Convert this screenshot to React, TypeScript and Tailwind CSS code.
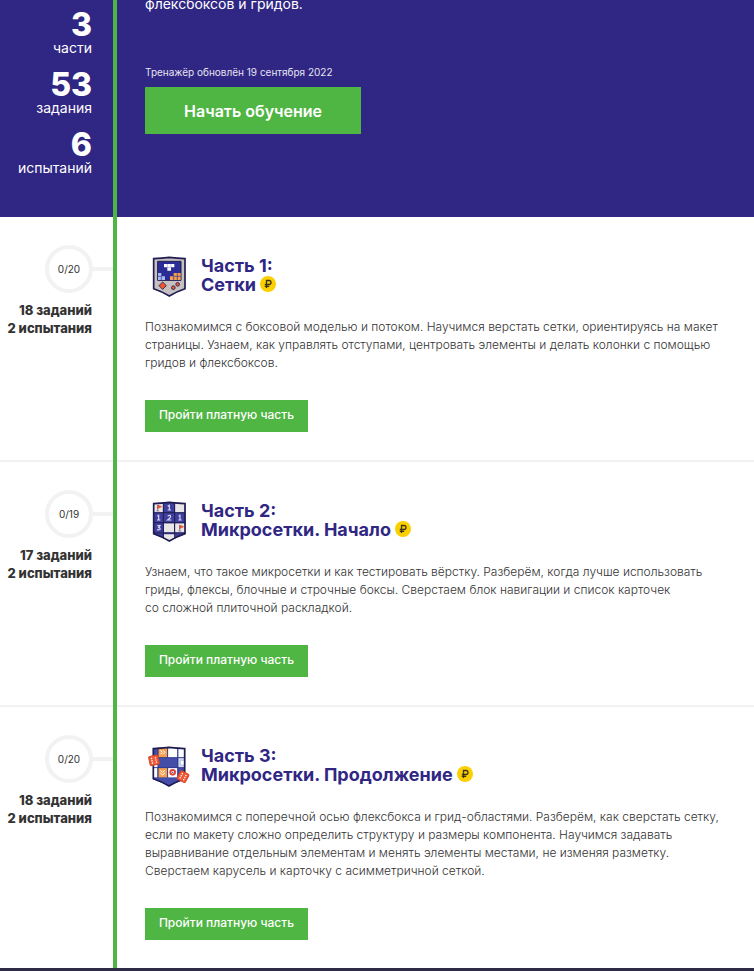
import type { ReactNode } from 'react';

const SHIELD = 'M24 25 L73 20 L122 25 L122 117 Q98 127 73 138 Q48 127 24 117 Z';
const OUTLINE = 'M26 26 Q50 25 73 22 Q97 25 120 26 L120 116 Q96 124 73 138 Q50 124 26 116 Z';

function ConsoleIcon() {
  return (
    <svg viewBox="0 6 144 144" className="size-12 shrink-0" aria-hidden="true">
      <path d={OUTLINE} fill="#c6c0c1" stroke="#1e1c50" strokeWidth="5" />
      <path d="M38 34 H108 V91 H38 Z" fill="#2b2c96" stroke="#1e1c50" strokeWidth="3" />
      <path d="M57 42 H88 V52 H78 V62 H67 V52 H57 Z" fill="#fff" />
      <path d="M67 42 V52 M78 42 V52 M67 52 H78" stroke="#8b8bc8" strokeWidth="1.5" />
      <path d="M39 69 H49 V79 H60 V90 H39 Z" fill="#a9bdec" />
      <path d="M39 79 H49 V90" fill="none" stroke="#2b2c96" strokeWidth="2" />
      <path d="M75 79 H86 V69 H107 V90 H75 Z" fill="#f5a04c" />
      <path d="M86 79 H107 M86 79 V90 M97 69 V90" stroke="#2b2c96" strokeWidth="2" />
      <path d="M53 96 L64 107 L53 118 L42 107 Z" fill="#ef5630" stroke="#1e1c50" strokeWidth="2.5" />
      <path d="M48 102 H58 V112 H48 Z" fill="#ef5630" />
      <circle cx="85" cy="113" r="5.5" fill="#ef5630" stroke="#1e1c50" strokeWidth="2.5" />
      <circle cx="98" cy="103" r="5.5" fill="#ef5630" stroke="#1e1c50" strokeWidth="2.5" />
    </svg>
  );
}

function Flag({ x, y }: { x: number; y: number }) {
  return (
    <g transform={`translate(${x} ${y})`}>
      <path d="M0 0 L12 5 L0 11 Z" fill="#ef5630" stroke="#ef5630" strokeWidth="2" />
      <path d="M0 0 V18 M-4 18 H5" stroke="#6b5a75" strokeWidth="2" />
    </g>
  );
}

function MinesIcon() {
  return (
    <svg viewBox="0 6 144 144" className="size-12 shrink-0" aria-hidden="true">
      <defs>
        <clipPath id="mines-shield">
          <path d={SHIELD} />
        </clipPath>
      </defs>
      <g clipPath="url(#mines-shield)">
        <rect x="20" y="18" width="106" height="124" fill="#3f3e9d" />
        <rect x="24" y="20" width="30" height="33" fill="#e9e6e8" />
        <rect x="90" y="20" width="32" height="33" fill="#e9e6e8" />
        <rect x="57" y="85" width="30" height="27" fill="#e9e6e8" />
        <rect x="90" y="85" width="32" height="27" fill="#e9e6e8" />
        <path d="M57 118 H90 V140 H57 Z" fill="#e9e6e8" />
        <path d="M55 20 V138 M89 20 V138 M24 53 H122 M24 83 H122 M24 114 H122" stroke="#1e1c50" strokeWidth="3" />
      </g>
      <Flag x={38} y={30} />
      <Flag x={104} y={90} />
      <g fill="none" stroke="#d7d8f3" strokeWidth="3.5">
        <path d="M68 34 L73 31 V44 M68 45 H78" />
        <path d="M37 64 L41 61 V74 M36 75 H46" />
        <path d="M68 63 Q77 58 77 65 Q76 69 68 75 H79" />
        <path d="M101 64 L105 61 V74 M100 75 H110" />
        <path d="M37 92 H45 L41 98 Q47 99 45 103 Q42 106 36 104" />
      </g>
      <path d={OUTLINE} fill="none" stroke="#1e1c50" strokeWidth="5" />
    </svg>
  );
}

function Die({ x, y, angle }: { x: number; y: number; angle: number }) {
  return (
    <g transform={`translate(${x} ${y}) rotate(${angle})`}>
      <rect x="-14" y="-14" width="28" height="28" rx="4" fill="#f15a35" stroke="#d4452c" strokeWidth="3" />
      <g fill="#fff">
        <circle cx="-6" cy="-7" r="2.2" />
        <circle cx="6" cy="-7" r="2.2" />
        <circle cx="-6" cy="0" r="2.2" />
        <circle cx="6" cy="0" r="2.2" />
        <circle cx="-6" cy="7" r="2.2" />
        <circle cx="6" cy="7" r="2.2" />
      </g>
    </g>
  );
}

function DiceIcon() {
  return (
    <svg viewBox="15 6 144 144" className="size-12 shrink-0" aria-hidden="true">
      <g transform="translate(14 0)">
        <clipPath id="dice-shield">
          <path d={SHIELD} />
        </clipPath>
        <g clipPath="url(#dice-shield)">
          <rect x="20" y="18" width="106" height="124" fill="#444da8" />
          <rect x="41" y="20" width="27" height="32" fill="#f5a04c" />
          <rect x="70" y="20" width="28" height="32" fill="#fff" />
          <rect x="101" y="20" width="25" height="32" fill="#fff" />
          <rect x="101" y="54" width="25" height="28" fill="#d3daf0" />
          <rect x="20" y="54" width="19" height="28" fill="#fff" />
          <rect x="41" y="84" width="27" height="28" fill="#f5a04c" />
          <rect x="70" y="84" width="28" height="28" fill="#fff" />
          <rect x="20" y="84" width="18" height="28" fill="#fff" />
          <path d="M40 20 V113 M69 20 V52 M69 84 V112 M99 20 V112 M24 53 H122 M24 83 H122" stroke="#292e82" strokeWidth="2" />
          <path d="M107 61 H120 V75 H107 Z" fill="#fff" stroke="#9cabd9" strokeWidth="2" />
        </g>
        <path d={OUTLINE} fill="none" stroke="#1e1c50" strokeWidth="5" />
        <path d="M47 31 L53 37 L47 43 M55 31 L61 37 L55 43 M47 91 L54 97 L61 91 M47 99 L54 105 L61 99" fill="none" stroke="#fff" strokeWidth="3" />
        <circle cx="84" cy="97" r="7" fill="#fff" stroke="#df4538" strokeWidth="6" />
        <circle cx="84" cy="97" r="2" fill="#292e82" />
      </g>
      <Die x={42} y={61} angle={-12} />
      <Die x={129} y={110} angle={28} />
    </svg>
  );
}

function Rouble() {
  return (
    <span className="inline-flex size-4 items-center justify-center rounded-full bg-[#fbd000] align-middle" title="Платная часть">
      <svg viewBox="0 0 16 16" className="size-4" fill="none" stroke="#3c3418" strokeWidth="1.3" aria-hidden="true">
        <path d="M6.5 12 V4.5 H9 Q11 4.5 11 6.5 Q11 8.5 9 8.5 H4.8 M4.8 10.3 H9.2" />
      </svg>
    </span>
  );
}

interface Part {
  done: string;
  tasks: string;
  number: string;
  name: string;
  icon: ReactNode;
  lines: string[];
}

const parts: Part[] = [
  {
    done: '0/20',
    tasks: '18 заданий',
    number: 'Часть 1:',
    name: 'Сетки',
    icon: <ConsoleIcon />,
    lines: [
      'Познакомимся с боксовой моделью и потоком. Научимся верстать сетки, ориентируясь на макет',
      'страницы. Узнаем, как управлять отступами, центровать элементы и делать колонки с помощью',
      'гридов и флексбоксов.',
    ],
  },
  {
    done: '0/19',
    tasks: '17 заданий',
    number: 'Часть 2:',
    name: 'Микросетки. Начало',
    icon: <MinesIcon />,
    lines: [
      'Узнаем, что такое микросетки и как тестировать вёрстку. Разберём, когда лучше использовать',
      'гриды, флексы, блочные и строчные боксы. Сверстаем блок навигации и список карточек',
      'со сложной плиточной раскладкой.',
    ],
  },
  {
    done: '0/20',
    tasks: '18 заданий',
    number: 'Часть 3:',
    name: 'Микросетки. Продолжение',
    icon: <DiceIcon />,
    lines: [
      'Познакомимся с поперечной осью флексбокса и грид-областями. Разберём, как сверстать сетку,',
      'если по макету сложно определить структуру и размеры компонента. Научимся задавать',
      'выравнивание отдельным элементам и менять элементы местами, не изменяя разметку.',
      'Сверстаем карусель и карточку с асимметричной сеткой.',
    ],
  },
];

const stats = [
  { value: '3', label: 'части' },
  { value: '53', label: 'задания' },
  { value: '6', label: 'испытаний' },
];

function Hero() {
  return (
    <header className="grid grid-cols-[113px_4px_1fr] bg-[#302683] text-white">
      <dl className="flex flex-col gap-[14px] pt-[10px] pr-[21px] text-right">
        {stats.map((s) => (
          <div key={s.label} className="flex flex-col-reverse">
            <dt className="text-[14px] leading-4">{s.label}</dt>
            <dd className="text-[32px] leading-[30px] font-extrabold">{s.value}</dd>
          </div>
        ))}
      </dl>
      <div className="bg-[#4fb543]" />
      <div className="px-7 pb-[83px]">
        <p className="text-[14px] leading-[8px]">флексбоксов и гридов.</p>
        <p className="mt-14 text-[10px] leading-4 text-[#e6e4f2]">Тренажёр обновлён 19 сентября 2022</p>
        <button className="mt-[7px] block h-[47px] w-[216px] bg-[#4fb543] text-[16px] font-semibold">Начать обучение</button>
      </div>
    </header>
  );
}

function PartSection({ part }: { part: Part }) {
  return (
    <section className="group grid grid-cols-[113px_4px_1fr]">
      <div className="border-b-2 border-[#f2f2f2] pt-7 group-last:border-b-0">
        <div className="flex items-center justify-end">
          <div className="flex size-12 items-center justify-center rounded-full border-4 border-[#f2f2f2] text-[10px] text-[#333333]">{part.done}</div>
          <div className="h-1 w-5 bg-[#f2f2f2]" />
        </div>
        <p className="mt-2 pr-[21px] text-right text-[13px] leading-[18px] font-extrabold whitespace-nowrap text-[#333333]">
          {part.tasks}
          <br />2 испытания
        </p>
      </div>
      <div className="bg-[#4fb543]" />
      <div className="border-b-2 border-[#f2f2f2] px-7 pt-[35px] pb-7 group-last:border-b-0">
        <div className="flex items-start gap-2">
          {part.icon}
          <h2 className="pt-1 text-[18px] leading-[19px] font-bold text-[#302683]">
            {part.number}
            <br />
            {part.name} <span className="inline-block h-[19px] align-top leading-[15px]"><Rouble /></span>
          </h2>
        </div>
        <p className="mt-[18px] text-[12px] leading-[18px] font-light whitespace-nowrap text-[#333333]">
          {part.lines.map((line) => (
            <span key={line} className="block">{line}</span>
          ))}
        </p>
        <button className="mt-7 block h-8 w-[163px] bg-[#4fb543] pb-0.5 text-[12px] font-medium text-white">Пройти платную часть</button>
      </div>
    </section>
  );
}

export default function App() {
  return (
    <div className="overflow-hidden bg-white font-['Inter','Noto_Sans',sans-serif]">
      <Hero />
      <main>
        {parts.map((part) => (
          <PartSection key={part.number} part={part} />
        ))}
      </main>
      <footer className="h-[3px] bg-[#2d2b45]" />
    </div>
  );
}
